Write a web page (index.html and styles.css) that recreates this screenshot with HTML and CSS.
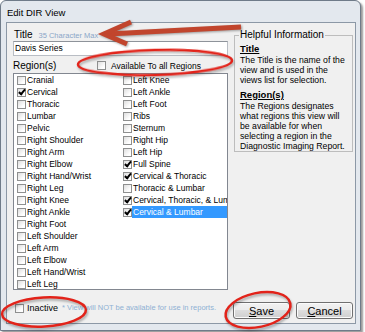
FILE: index.html
```html
<!DOCTYPE html>
<html>
  <head>
    <title>Edit DIR View</title>
    <meta charset="utf-8">
    <link rel="stylesheet" href="styles.css">
  </head>
  <body>
    <!-- (A) DIALOG WINDOW -->
    <div class="window">
      <div class="caption">Edit DIR View</div>
      <div class="client">
        <div class="main">
          <!-- (A1) TITLE + REGIONS -->
          <div class="left">
            <div class="label-row">
              <span class="lbl">Title</span>
              <span class="hint">35 Character Max</span>
            </div>
            <div class="textbox">Davis Series</div>
            <div class="region-row">
              <span class="lbl regions">Region(s)</span>
              <label class="chk"><span class="cb"></span>Available To all Regions</label>
            </div>
            <div class="listbox">
              <ul class="col">
                <li><i class="cb"></i><span>Cranial</span></li>
                <li><i class="cb on"></i><span>Cervical</span></li>
                <li><i class="cb"></i><span>Thoracic</span></li>
                <li><i class="cb"></i><span>Lumbar</span></li>
                <li><i class="cb"></i><span>Pelvic</span></li>
                <li><i class="cb"></i><span>Right Shoulder</span></li>
                <li><i class="cb"></i><span>Right Arm</span></li>
                <li><i class="cb"></i><span>Right Elbow</span></li>
                <li><i class="cb"></i><span>Right Hand/Wrist</span></li>
                <li><i class="cb"></i><span>Right Leg</span></li>
                <li><i class="cb"></i><span>Right Knee</span></li>
                <li><i class="cb"></i><span>Right Ankle</span></li>
                <li><i class="cb"></i><span>Right Foot</span></li>
                <li><i class="cb"></i><span>Left Shoulder</span></li>
                <li><i class="cb"></i><span>Left Arm</span></li>
                <li><i class="cb"></i><span>Left Elbow</span></li>
                <li><i class="cb"></i><span>Left Hand/Wrist</span></li>
                <li><i class="cb"></i><span>Left Leg</span></li>
              </ul>
              <ul class="col">
                <li><i class="cb"></i><span>Left Knee</span></li>
                <li><i class="cb"></i><span>Left Ankle</span></li>
                <li><i class="cb"></i><span>Left Foot</span></li>
                <li><i class="cb"></i><span>Ribs</span></li>
                <li><i class="cb"></i><span>Sternum</span></li>
                <li><i class="cb"></i><span>Right Hip</span></li>
                <li><i class="cb"></i><span>Left Hip</span></li>
                <li><i class="cb on"></i><span>Full Spine</span></li>
                <li><i class="cb on"></i><span>Cervical &amp; Thoracic</span></li>
                <li><i class="cb"></i><span>Thoracic &amp; Lumbar</span></li>
                <li><i class="cb on"></i><span>Cervical, Thoracic, &amp; Lumbar</span></li>
                <li><i class="cb on"></i><span class="sel">Cervical &amp; Lumbar</span></li>
              </ul>
            </div>
          </div>
          <!-- (A2) HELP BOX -->
          <fieldset class="help">
            <legend>Helpful Information</legend>
            <h4>Title</h4>
            <p>The Title is the name of the<br>view and is used in the<br>views list for selection.</p>
            <h4>Region(s)</h4>
            <p>The Regions designates<br>what regions this view will<br>be available for when<br>selecting a region in the<br>Diagnostic Imaging Report.</p>
          </fieldset>
        </div>
        <!-- (A3) FOOTER -->
        <div class="footer">
          <label class="chk inactive"><span class="cb"></span>Inactive</label>
          <span class="note">* View will NOT be available for use in reports.</span>
          <button class="btn"><u>S</u>ave</button>
          <button class="btn"><u>C</u>ancel</button>
        </div>
      </div>
    </div>

    <!-- (B) RED ANNOTATIONS -->
    <svg class="marks" width="365" height="332" viewBox="0 0 365 332">
      <g class="arrow" fill="none" stroke="#c1452d" stroke-width="5">
        <path d="M241 27 L108 34"/>
        <path d="M131 22 L104 34 L127 44"/>
      </g>
      <g class="rings" fill="none" stroke="#e2231a" stroke-width="2.5">
        <ellipse cx="155" cy="62.5" rx="77" ry="12.5" transform="rotate(-1.5 155 62.5)"/>
        <ellipse cx="44" cy="312" rx="42" ry="14.5" transform="rotate(-3 44 312)"/>
        <ellipse cx="258" cy="310" rx="33" ry="17" transform="rotate(-12 258 310)"/>
      </g>
    </svg>
  </body>
</html>
```

FILE: styles.css
```css
* {
  box-sizing: border-box;
  font-family: "Liberation Sans", Arial, sans-serif;
}
body {
  margin: 0;
  position: relative;
  width: 365px;
  height: 332px;
  overflow: hidden;
  background: #fff;
  color: #000;
}

/* (A) WINDOW FRAME */
.window {
  width: 361px;
  height: 331px;
  display: flex;
  flex-direction: column;
  padding: 0 4px 6px 5px;
  border: 1px solid #6f7b89;
  border-radius: 6px 6px 0 0;
  background: #e3e8ee;
  box-shadow: 2px 2px 2px rgba(0,0,0,.4);
}
.caption {
  height: 21px;
  padding: 6px 0 0 1px;
  font-size: 9.5px;
  line-height: 12px;
}
.client {
  height: 302px;
  display: flex;
  flex-direction: column;
  border: 1px solid #8c98a6;
  background: #f0f0f0;
}
.main {
  display: grid;
  grid-template-columns: 215px 119px;
  column-gap: 6px;
  align-items: start;
  padding: 6px 2px 0 6px;
}

/* (B) LEFT SIDE */
.label-row {
  height: 12px;
  display: flex;
  align-items: baseline;
  padding-left: 1px;
  line-height: 12px;
}
.lbl { font-size: 10px; }
.hint {
  margin-left: 6px;
  font-size: 7.5px;
  color: #8aa6c8;
}
.textbox {
  height: 15px;
  padding-left: 1px;
  border: 1px solid #b9bdc4;
  border-top-color: #8e939a;
  background: #fff;
  font-size: 8.5px;
  line-height: 13px;
}
.region-row {
  height: 17px;
  display: flex;
  align-items: center;
  padding-top: 2px;
}
.regions { width: 84px; }
.chk {
  display: flex;
  align-items: center;
  font-size: 8.5px;
}
.chk .cb { margin-right: 5px; }
.cb {
  position: relative;
  flex: none;
  width: 9px;
  height: 9px;
  border: 1px solid #8e8f8f;
  background: linear-gradient(135deg, #dedede, #fff 75%);
}
.cb.on::after {
  content: "";
  position: absolute;
  left: 2px;
  top: -1px;
  width: 2px;
  height: 5px;
  border: solid #000;
  border-width: 0 2px 2px 0;
  transform: rotate(40deg);
}
.listbox {
  height: 217px;
  display: grid;
  grid-template-columns: 106px 1fr;
  overflow: hidden;
  border: 1px solid #828790;
  background: #fff;
}
.col {
  min-width: 0;
  overflow: hidden;
  margin: 0;
  padding: 0 0 0 3px;
  list-style: none;
  font-size: 8.5px;
}
.col li {
  height: 12px;
  display: flex;
  align-items: center;
  white-space: nowrap;
}
.col li span {
  padding-left: 1px;
  line-height: 12px;
}
.col li .sel {
  flex: 1;
  background: #3399ff;
  color: #fff;
}

/* (C) HELP BOX */
.help {
  min-width: 0;
  margin: 0;
  padding: 2px 3px 0 4px;
  border: 1px solid #bdbdbd;
}
.help legend {
  padding: 0 1px;
  font-size: 10px;
  line-height: 12px;
}
.help h4 {
  margin: 0;
  padding-left: 1px;
  font-size: 9.5px;
  line-height: 12px;
  text-decoration: underline;
}
.help p {
  margin: 0 0 4px;
  padding-left: 1px;
  font-size: 8.7px;
  line-height: 10px;
  white-space: nowrap;
}
.help p:last-child { margin-bottom: 0; }

/* (D) FOOTER */
.footer {
  height: 17px;
  display: flex;
  align-items: center;
  margin-top: 12px;
  padding: 0 2px 0 8px;
}
.inactive {
  align-self: flex-start;
  height: 12px;
  font-size: 9px;
}
.inactive .cb { margin-right: 3px; }
.note {
  align-self: flex-start;
  margin-left: 4px;
  font-size: 7.5px;
  line-height: 12px;
  color: #8fb0d4;
}
.btn {
  width: 57px;
  height: 17px;
  display: flex;
  align-items: center;
  justify-content: center;
  padding: 0;
  border: 1px solid #707070;
  border-radius: 3px;
  background: linear-gradient(#f2f2f2, #ebebeb 50%, #dddddd 50%, #cfcfcf);
  box-shadow: inset 0 0 0 1px #fbfbfb;
  font-size: 11px;
  color: #000;
}
.footer .btn:first-of-type { margin-left: auto; }
.btn + .btn { margin-left: 6px; }

/* (E) ANNOTATIONS */
.marks {
  position: absolute;
  top: 0;
  left: 0;
  pointer-events: none;
}
.marks .arrow { filter: drop-shadow(1px 1px 1px rgba(0,0,0,.35)); }
.marks .rings { filter: drop-shadow(1px 2px 1px rgba(0,0,0,.3)); }
```
